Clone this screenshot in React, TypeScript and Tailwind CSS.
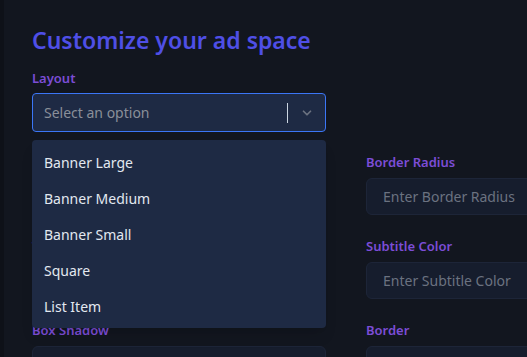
import React from "react";

const Field = ({ label, placeholder }: { label: string; placeholder: string }) => (
  <div className="flex flex-col">
    <div className="text-[13px] leading-[18px] font-semibold text-[#7c4dd6]">{label}</div>
    <div className="mt-[7px] h-[37px] rounded-[6px] border border-[#1d2538] bg-[#161d2d] flex items-center pl-[16px] text-[14px] text-[#6b7280] whitespace-nowrap">
      {placeholder}
    </div>
  </div>
);

export default function App() {
  const items = ["Banner Large", "Banner Medium", "Banner Small", "Square", "List Item"];
  return (
    <div
      className="w-[527px] h-[357px] overflow-hidden bg-[#12161f] flex"
      style={{ fontFamily: '"Noto Sans", "Open Sans", sans-serif' }}
    >
      <div className="w-[4px] shrink-0 bg-[#0e1118]" />
      <div className="pl-[28px] pt-[26px] shrink-0">
        <h1 className="text-[23px] leading-[29px] font-semibold text-[#4f4fe6]">Customize your ad space</h1>
        <div className="grid grid-cols-[294px_294px] gap-x-[40px] mt-[14px]">
          <div className="relative flex flex-col">
            <div className="text-[13px] leading-[18px] font-semibold text-[#7c4dd6]">Layout</div>
            <div className="mt-[6px] h-[39px] rounded-[4px] border-[1.5px] border-[#3b76f6] bg-[#1e2a44] flex items-center pl-[11px] text-[14px] text-[#8a8f99]">
              <span className="flex-1">Select an option</span>
              <span className="w-px h-[20px] bg-[#cbd5e1] mr-[12px]" />
              <svg width="14" height="14" viewBox="0 0 24 24" fill="none" stroke="#6b7280" strokeWidth="3" strokeLinecap="round" strokeLinejoin="round" className="mr-[11px]">
                <path d="M6 9l6 6 6-6" />
              </svg>
            </div>
            <div className="absolute left-0 right-0 top-[71px] z-10 rounded-[4px] bg-[#1e2a44] py-[4px] shadow-lg">
              {items.map((t) => (
                <div key={t} className="h-[36px] flex items-center pl-[12px] text-[14px] text-[#e2e8f0]">
                  {t}
                </div>
              ))}
            </div>
          </div>
          <div />
          <div className="mt-[21px]"><Field label="Border Width" placeholder="Enter Border Width" /></div>
          <div className="mt-[21px]"><Field label="Border Radius" placeholder="Enter Border Radius" /></div>
          <div className="mt-[22px]"><Field label="Title Color" placeholder="Enter Title Color" /></div>
          <div className="mt-[22px]"><Field label="Subtitle Color" placeholder="Enter Subtitle Color" /></div>
          <div className="mt-[22px]"><Field label="Box Shadow" placeholder="Enter Box Shadow" /></div>
          <div className="mt-[22px]"><Field label="Border" placeholder="Enter Border" /></div>
        </div>
      </div>
    </div>
  );
}
